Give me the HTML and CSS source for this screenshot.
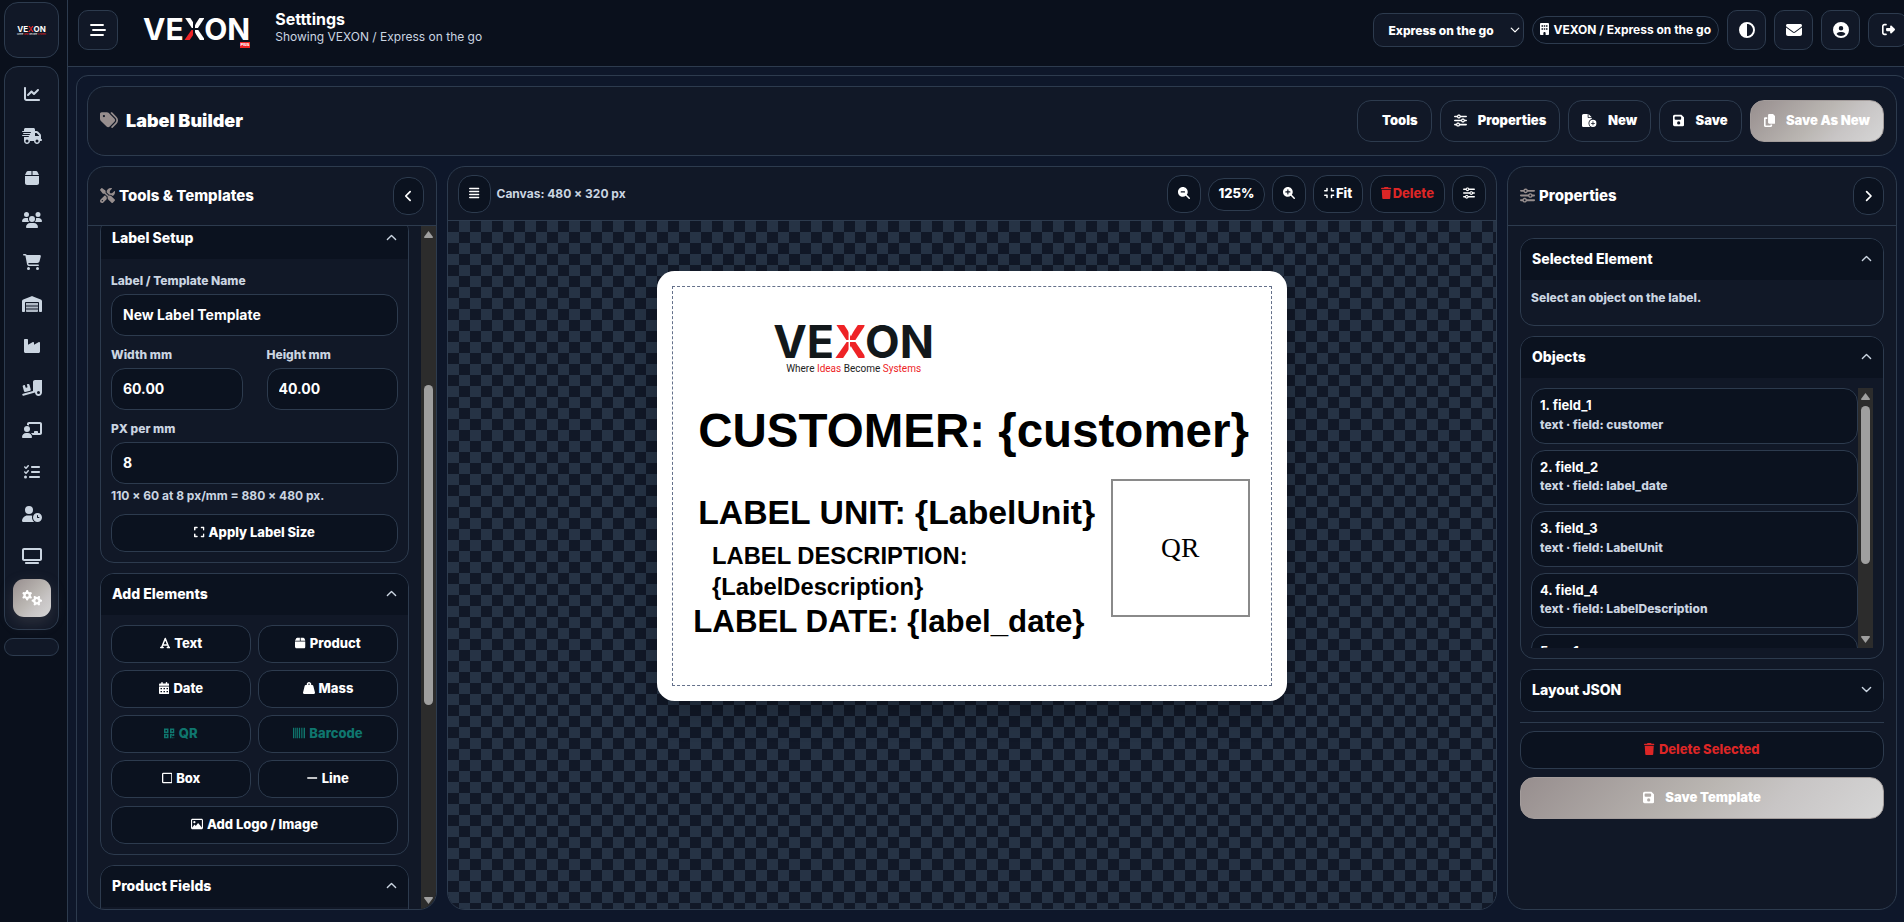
FILE: index.html
```html
<!DOCTYPE html>
<html lang="en">
<head>
<meta charset="utf-8">
<meta name="viewport" content="width=device-width, initial-scale=1">
<title>Label Builder</title>
<link rel="stylesheet" href="styles.css">
</head>
<body>
<svg class="sprite" aria-hidden="true">
  <symbol id="i-chart" viewBox="0 0 512 512"><path d="M64 64c0-17.700-14.300-32-32-32S0 46.300 0 64V400c0 44.200 35.800 80 80 80H480c17.700 0 32-14.300 32-32s-14.300-32-32-32H80c-8.800 0-16-7.200-16-16V64zm406.600 86.600c12.500-12.500 12.500-32.800 0-45.300s-32.800-12.500-45.300 0L320 210.700l-57.400-57.400c-12.500-12.500-32.800-12.500-45.300 0l-112 112c-12.500 12.500-12.500 32.800 0 45.300s32.800 12.500 45.300 0L240 221.300l57.400 57.400c12.500 12.500 32.800 12.500 45.300 0l128-128z"/></symbol>
  <symbol id="i-truck" viewBox="0 0 640 512"><path d="M112 0C85.500 0 64 21.500 64 48V96H16c-8.800 0-16 7.200-16 16s7.200 16 16 16H272c8.800 0 16 7.200 16 16s-7.200 16-16 16H48c-8.800 0-16 7.200-16 16s7.200 16 16 16H240c8.800 0 16 7.200 16 16s-7.200 16-16 16H16c-8.800 0-16 7.200-16 16s7.200 16 16 16H208c8.800 0 16 7.200 16 16s-7.200 16-16 16H64V416c0 53 43 96 96 96s96-43 96-96H384c0 53 43 96 96 96s96-43 96-96h32c17.700 0 32-14.300 32-32s-14.300-32-32-32V237.300c0-17-6.700-33.300-18.700-45.300L512 114.700c-12-12-28.300-18.700-45.300-18.700H416V48c0-26.500-21.500-48-48-48H112zM544 237.300V256H416V160h50.700L544 237.300zM160 368a48 48 0 1 1 0 96 48 48 0 1 1 0-96zm272 48a48 48 0 1 1 96 0 48 48 0 1 1 -96 0z"/></symbol>
  <symbol id="i-box" viewBox="0 0 448 512"><path d="M50.700 58.500L0 160H208V32H93.700C75.500 32 58.900 42.300 50.700 58.500zM240 160H448L397.300 58.500C389.100 42.300 372.500 32 354.300 32H240V160zm208 32H0V416c0 35.300 28.700 64 64 64H384c35.300 0 64-28.700 64-64V192z"/></symbol>
  <symbol id="i-users" viewBox="0 0 640 512"><path d="M144 0a80 80 0 1 1 0 160A80 80 0 1 1 144 0zM512 0a80 80 0 1 1 0 160A80 80 0 1 1 512 0zM0 298.700C0 239.800 47.800 192 106.700 192h42.700c15.900 0 31 3.500 44.600 9.700c-1.300 7.200-1.900 14.700-1.900 22.300c0 38.200 16.800 72.500 43.300 96H21.300C9.600 320 0 310.400 0 298.700zM404.600 320c26.600-23.500 43.300-57.800 43.300-96c0-7.600-.7-15-1.900-22.300c13.600-6.300 28.700-9.700 44.600-9.700h42.700C592.200 192 640 239.800 640 298.700c0 11.800-9.600 21.300-21.300 21.300H404.600zM224 224a96 96 0 1 1 192 0 96 96 0 1 1 -192 0zM128 485.300C128 411.700 187.700 352 261.300 352H378.700C452.300 352 512 411.700 512 485.300c0 14.700-11.900 26.700-26.700 26.700H154.700c-14.700 0-26.700-11.900-26.700-26.700z"/></symbol>
  <symbol id="i-cart" viewBox="0 0 576 512"><path d="M0 24C0 10.700 10.700 0 24 0H69.500c22 0 41.500 12.800 50.600 32h411c26.300 0 45.500 25 38.600 50.400l-41 152.300c-8.500 31.400-37 53.300-69.500 53.300H170.700l5.400 28.500c2.200 11.300 12.100 19.500 23.600 19.500H488c13.300 0 24 10.700 24 24s-10.700 24-24 24H199.700c-34.600 0-64.300-24.600-70.700-58.500L77.400 54.500c-.7-3.800-4-6.500-7.900-6.500H24C10.700 48 0 37.300 0 24zM128 464a48 48 0 1 1 96 0 48 48 0 1 1 -96 0zm336-48a48 48 0 1 1 0 96 48 48 0 1 1 0-96z"/></symbol>
  <symbol id="i-warehouse" viewBox="0 0 640 512"><path d="M0 488V171.300c0-26.200 15.900-49.700 40.200-59.400L308.100 4.800c7.600-3.100 16.100-3.100 23.800 0L599.800 111.900c24.300 9.700 40.200 33.300 40.200 59.400V488c0 13.300-10.700 24-24 24H568c-13.300 0-24-10.700-24-24V224c0-17.700-14.300-32-32-32H128c-17.700 0-32 14.300-32 32V488c0 13.300-10.700 24-24 24H24c-13.300 0-24-10.700-24-24z"/><path d="M488 512H152c-13.300 0-24-10.700-24-24V432H512v56c0 13.300-10.700 24-24 24zM128 400V336H512v64zM128 304V224H512v80z" opacity=".85"/></symbol>
  <symbol id="i-industry" viewBox="0 0 512 512"><path d="M32 32C14.300 32 0 46.300 0 64V432c0 26.500 21.500 48 48 48H464c26.500 0 48-21.500 48-48V152.200c0-18.200-19.400-29.700-35.400-21.100L320 215.400V152.200c0-18.200-19.400-29.700-35.400-21.100L128 215.400V64c0-17.700-14.300-32-32-32H32z"/></symbol>
  <symbol id="i-ramp" viewBox="0 0 640 512"><path d="M640 0V400c0 61.900-50.100 112-112 112c-61 0-110.500-48.700-112-109.300L48.400 502.900c-17.100 4.600-34.600-5.400-39.300-22.500s5.400-34.600 22.500-39.300L352 353.800V64c0-35.300 28.700-64 64-64H640zM576 400a48 48 0 1 0 -96 0 48 48 0 1 0 96 0zM23.100 207.700c-4.600-17.100 5.600-34.600 22.600-39.200l46.400-12.400 20.700 77.300c2.300 8.500 11.100 13.600 19.600 11.300l30.900-8.300c8.500-2.300 13.600-11.100 11.300-19.600l-20.700-77.300 46.400-12.400c17.100-4.600 34.600 5.600 39.200 22.600l41.400 154.500c4.600 17.100-5.600 34.600-22.600 39.200L103.700 384.900c-17.100 4.600-34.600-5.600-39.200-22.600L23.100 207.700z"/></symbol>
  <symbol id="i-board" viewBox="0 0 640 512"><path d="M160 64c0-35.300 28.700-64 64-64H576c35.300 0 64 28.700 64 64V352c0 35.300-28.700 64-64 64H336.800c-11.800-25.500-29.900-47.500-52.400-64H384V320c0-17.700 14.300-32 32-32h64c17.700 0 32 14.300 32 32v32h64V64L224 64v49.100C205.200 102.200 183.300 96 160 96V64zm0 64a96 96 0 1 1 0 192 96 96 0 1 1 0-192zM133.300 352h53.300C260.300 352 320 411.700 320 485.300c0 14.700-11.900 26.700-26.700 26.700H26.700C11.900 512 0 500.100 0 485.300C0 411.700 59.700 352 133.300 352z"/></symbol>
  <symbol id="i-list" viewBox="0 0 512 512"><path d="M152.100 38.200c9.900 8.900 10.700 24 1.800 33.900l-72 80c-4.400 4.900-10.600 7.800-17.200 7.900s-12.900-2.400-17.600-7L7 113C-2.300 103.600-2.300 88.400 7 79s24.600-9.400 33.900 0l22.100 22.100 55.100-61.200c8.900-9.900 24-10.700 33.900-1.800zm0 160c9.900 8.900 10.700 24 1.800 33.900l-72 80c-4.400 4.900-10.600 7.800-17.200 7.900s-12.900-2.400-17.600-7L7 273c-9.400-9.400-9.400-24.600 0-33.900s24.600-9.400 33.900 0l22.100 22.100 55.100-61.200c8.900-9.900 24-10.700 33.900-1.800zM224 96c0-17.700 14.300-32 32-32H480c17.700 0 32 14.300 32 32s-14.300 32-32 32H256c-17.700 0-32-14.300-32-32zm0 160c0-17.700 14.300-32 32-32H480c17.700 0 32 14.300 32 32s-14.300 32-32 32H256c-17.700 0-32-14.300-32-32zM160 416c0-17.700 14.300-32 32-32H480c17.700 0 32 14.300 32 32s-14.300 32-32 32H192c-17.700 0-32-14.300-32-32zM48 368a48 48 0 1 1 0 96 48 48 0 1 1 0-96z"/></symbol>
  <symbol id="i-clock" viewBox="0 0 640 512"><path d="M224 0a128 128 0 1 1 0 256A128 128 0 1 1 224 0zM178.300 304h91.400c20.600 0 40.400 3.500 58.800 9.900C323 331 320 349.100 320 368c0 59.500 29.500 112.100 74.800 144H29.700C13.300 512 0 498.700 0 482.300C0 383.800 79.800 304 178.300 304z"/><path fill-rule="evenodd" d="M352 368a144 144 0 1 1 288 0 144 144 0 1 1 -288 0zM496 288c-8.800 0-16 7.200-16 16v64c0 8.800 7.200 16 16 16h48c8.800 0 16-7.200 16-16s-7.200-16-16-16H512V304c0-8.800-7.200-16-16-16z"/></symbol>
  <symbol id="i-tv" viewBox="0 0 640 512"><path fill-rule="evenodd" d="M64 64V352H576V64H64zM0 64C0 28.700 28.700 0 64 0H576c35.300 0 64 28.700 64 64V352c0 35.300-28.700 64-64 64H64c-35.300 0-64-28.700-64-64V64zM128 448H512c17.700 0 32 14.300 32 32s-14.300 32-32 32H128c-17.700 0-32-14.300-32-32s14.300-32 32-32z"/></symbol>
  <symbol id="i-gears" viewBox="0 0 640 512">
    <g id="gear"><circle cx="165" cy="170" r="84" fill="none" stroke="currentColor" stroke-width="72"/><path d="M165 38V62M165 278v24M51 104l20 12M259 224l20 12M51 236l20-12M259 116l20-12" fill="none" stroke="currentColor" stroke-width="74" stroke-linecap="round"/></g>
    <use href="#gear" transform="rotate(30 475 342) translate(310 172)"/>
  </symbol>
  <symbol id="i-tags" viewBox="0 0 512 512"><path d="M345 39.100L472.800 168.400c52.400 53 52.400 138.200 0 191.200L360.800 472.900c-9.300 9.400-24.500 9.500-33.900 .2s-9.500-24.500-.2-33.900L438.600 325.900c33.900-34.300 33.900-89.400 0-123.700L310.900 72.900c-9.300-9.400-9.200-24.600 .2-33.900s24.600-9.200 33.900 .2zM0 229.500V80C0 53.500 21.500 32 48 32H197.500c17 0 33.300 6.700 45.300 18.700l168 168c25 25 25 65.500 0 90.500L277.300 442.700c-25 25-65.500 25-90.500 0l-168-168C6.700 262.700 0 246.500 0 229.500zM144 144a32 32 0 1 0 -64 0 32 32 0 1 0 64 0z"/></symbol>
  <symbol id="i-tools" viewBox="0 0 512 512"><path d="M78.600 5C69.100-2.400 55.600-1.500 47 7L7 47c-8.500 8.500-9.400 22-2.100 31.600l80 104c4.500 5.900 11.600 9.400 19 9.400h54.100l109 109c-14.700 29-10 65.400 14.300 89.600l112 112c12.500 12.500 32.800 12.500 45.300 0l64-64c12.500-12.500 12.500-32.800 0-45.300l-112-112c-24.200-24.200-60.600-29-89.600-14.300l-109-109V104c0-7.500-3.500-14.500-9.400-19L78.600 5zM19.900 396.100C7.200 408.800 0 426.100 0 444.100C0 481.600 30.400 512 67.900 512c18 0 35.300-7.200 48-19.900L233.700 374.300c-7.800-20.900-9-43.600-3.600-65.100l-61.700-61.700L19.900 396.100zM512 144c0-10.500-1.100-20.700-3.200-30.500c-2.400-11.200-16.100-14.100-24.200-6l-63.900 63.900c-3 3-7.100 4.700-11.300 4.700H352c-8.800 0-16-7.200-16-16V102.600c0-4.200 1.700-8.300 4.700-11.300l63.900-63.900c8.100-8.100 5.200-21.800-6-24.200C388.700 1.100 378.500 0 368 0C288.500 0 224 64.500 224 144l0 .8 85.300 85.300c36-9.100 75.800 .5 104 28.700L429 274.500c49-23 83-72.800 83-130.500zM56 432a24 24 0 1 1 48 0 24 24 0 1 1 -48 0z"/></symbol>
  <symbol id="i-sliders" viewBox="0 0 512 512"><path d="M0 416c0 17.700 14.300 32 32 32l54.700 0c12.300 28.300 40.500 48 73.300 48s61-19.700 73.300-48L480 448c17.700 0 32-14.300 32-32s-14.300-32-32-32l-246.700 0c-12.300-28.300-40.500-48-73.300-48s-61 19.700-73.300 48L32 384c-17.700 0-32 14.300-32 32zm128 0a32 32 0 1 1 64 0 32 32 0 1 1 -64 0zM320 256a32 32 0 1 1 64 0 32 32 0 1 1 -64 0zm32-80c-32.800 0-61 19.700-73.300 48L32 224c-17.700 0-32 14.300-32 32s14.300 32 32 32l246.700 0c12.300 28.300 40.500 48 73.300 48s61-19.700 73.300-48l54.700 0c17.700 0 32-14.300 32-32s-14.300-32-32-32l-54.700 0c-12.300-28.300-40.500-48-73.300-48zM192 128a32 32 0 1 1 0-64 32 32 0 1 1 0 64zm73.300-64C253 35.700 224.800 16 192 16s-61 19.700-73.300 48L32 64C14.300 64 0 78.300 0 96s14.300 32 32 32l86.700 0c12.300 28.300 40.500 48 73.300 48s61-19.700 73.300-48L480 128c17.700 0 32-14.300 32-32s-14.300-32-32-32L265.300 64z"/></symbol>
  <symbol id="i-save" viewBox="0 0 448 512"><path fill-rule="evenodd" d="M64 32C28.700 32 0 60.700 0 96V416c0 35.300 28.700 64 64 64H384c35.300 0 64-28.700 64-64V173.300c0-17-6.700-33.300-18.700-45.300L352 50.700C340 38.700 323.700 32 306.700 32H64zm0 96c0-17.700 14.300-32 32-32H288c17.700 0 32 14.300 32 32v64c0 17.700-14.300 32-32 32H96c-17.700 0-32-14.300-32-32V128zM224 288a64 64 0 1 1 0 128 64 64 0 1 1 0-128z"/></symbol>
  <symbol id="i-new" viewBox="0 0 576 512"><path d="M0 64C0 28.700 28.700 0 64 0H224V128c0 17.700 14.300 32 32 32H384v38.600C310.100 219.500 256 287.400 256 368c0 59.100 29.100 111.300 73.700 143.300c-3.200 .5-6.400 .7-9.700 .7H64c-35.300 0-64-28.700-64-64V64zm384 64H256V0L384 128z"/><path fill-rule="evenodd" d="M288 368a144 144 0 1 1 288 0 144 144 0 1 1 -288 0zM448 304c0-8.800-7.200-16-16-16s-16 7.200-16 16v48H368c-8.800 0-16 7.200-16 16s7.200 16 16 16h48v48c0 8.800 7.200 16 16 16s16-7.200 16-16V384h48c8.800 0 16-7.200 16-16s-7.200-16-16-16H448V304z"/></symbol>
  <symbol id="i-copy" viewBox="0 0 448 512"><path d="M208 0H332.100c12.700 0 24.900 5.100 33.900 14.100l67.900 67.900c9 9 14.100 21.200 14.100 33.900V336c0 26.500-21.500 48-48 48H208c-26.500 0-48-21.500-48-48V48c0-26.500 21.500-48 48-48zM48 128h80v64H64V448H256V416h64v48c0 26.500-21.500 48-48 48H48c-26.500 0-48-21.500-48-48V176c0-26.500 21.500-48 48-48z"/></symbol>
  <symbol id="i-building" viewBox="0 0 384 512"><path fill-rule="evenodd" d="M48 0C21.500 0 0 21.500 0 48V464c0 26.500 21.500 48 48 48h96V432c0-26.500 21.500-48 48-48s48 21.500 48 48v80h96c26.500 0 48-21.500 48-48V48c0-26.500-21.500-48-48-48H48zM64 96h64v64H64zM160 96h64v64h-64zM256 96h64v64h-64zM64 224h64v64H64zM160 224h64v64h-64zM256 224h64v64h-64z"/></symbol>
  <symbol id="i-half" viewBox="0 0 512 512"><path fill-rule="evenodd" d="M448 256c0-106-86-192-192-192V448c106 0 192-86 192-192zM0 256a256 256 0 1 1 512 0A256 256 0 1 1 0 256z"/></symbol>
  <symbol id="i-mail" viewBox="0 0 512 512"><path d="M48 64C21.500 64 0 85.500 0 112c0 15.100 7.100 29.300 19.200 38.400L236.800 313.600c11.400 8.500 27 8.500 38.400 0L492.800 150.400c12.100-9.100 19.200-23.300 19.200-38.400c0-26.500-21.500-48-48-48H48zM0 176V384c0 35.300 28.700 64 64 64H448c35.300 0 64-28.700 64-64V176L294.400 339.200c-22.800 17.100-54 17.100-76.800 0L0 176z"/></symbol>
  <symbol id="i-user" viewBox="0 0 512 512"><path fill-rule="evenodd" d="M399 384.200C376.900 345.800 335.400 320 288 320H224c-47.400 0-88.900 25.800-111 64.200c35.200 39.200 86.200 63.800 143 63.800s107.800-24.700 143-63.800zM0 256a256 256 0 1 1 512 0A256 256 0 1 1 0 256zm256 16a72 72 0 1 0 0-144 72 72 0 1 0 0 144z"/></symbol>
  <symbol id="i-exit" viewBox="0 0 512 512"><path d="M377.900 105.900L500.700 228.700c7.200 7.200 11.300 17.100 11.300 27.300s-4.100 20.100-11.300 27.300L377.900 406.100c-6.400 6.400-15 9.900-24 9.900c-18.700 0-33.900-15.200-33.900-33.900l0-62.100-128 0c-17.700 0-32-14.300-32-32l0-64c0-17.700 14.300-32 32-32l128 0 0-62.100c0-18.700 15.200-33.900 33.900-33.900c9 0 17.600 3.600 24 9.900zM160 96L96 96c-17.700 0-32 14.300-32 32l0 256c0 17.700 14.300 32 32 32l64 0c17.700 0 32 14.300 32 32s-14.300 32-32 32l-64 0c-53 0-96-43-96-96L0 128C0 75 43 32 96 32l64 0c17.700 0 32 14.300 32 32s-14.300 32-32 32z"/></symbol>
  <symbol id="i-stagger" viewBox="0 0 512 512"><path d="M32 96H416M96 256H480M32 416H416" fill="none" stroke="currentColor" stroke-width="60" stroke-linecap="round"/></symbol>
  <symbol id="i-lines" viewBox="0 0 448 512"><path d="M32 64H416M32 192H416M32 320H416M32 448H416" fill="none" stroke="currentColor" stroke-width="62" stroke-linecap="round"/></symbol>
  <symbol id="i-zoomout" viewBox="0 0 512 512"><path fill-rule="evenodd" d="M416 208c0 45.900-14.900 88.300-40 122.700L502.600 457.400c12.500 12.500 12.500 32.800 0 45.300s-32.800 12.500-45.300 0L330.700 376c-34.400 25.200-76.800 40-122.700 40C93.100 416 0 322.900 0 208S93.100 0 208 0S416 93.100 416 208zM136 184c-13.300 0-24 10.700-24 24s10.700 24 24 24H280c13.300 0 24-10.700 24-24s-10.700-24-24-24H136z"/></symbol>
  <symbol id="i-zoomin" viewBox="0 0 512 512"><path fill-rule="evenodd" d="M416 208c0 45.900-14.900 88.300-40 122.700L502.600 457.400c12.500 12.500 12.500 32.800 0 45.300s-32.800 12.500-45.300 0L330.700 376c-34.400 25.200-76.800 40-122.700 40C93.100 416 0 322.900 0 208S93.100 0 208 0S416 93.100 416 208zM184 296c0 13.300 10.700 24 24 24s24-10.700 24-24V232h64c13.300 0 24-10.700 24-24s-10.700-24-24-24H232V120c0-13.300-10.700-24-24-24s-24 10.700-24 24v64H120c-13.300 0-24 10.700-24 24s10.700 24 24 24h64v64z"/></symbol>
  <symbol id="i-compress" viewBox="0 0 448 512"><path d="M128 64v96H32M320 64v96h96M32 352h96v96M416 352h-96v96" fill="none" stroke="currentColor" stroke-width="64" stroke-linecap="round" stroke-linejoin="round"/></symbol>
  <symbol id="i-expand" viewBox="0 0 448 512"><path d="M32 160V64H128M320 64h96v96M416 352v96H320M128 448H32V352" fill="none" stroke="currentColor" stroke-width="64" stroke-linecap="round" stroke-linejoin="round"/></symbol>
  <symbol id="i-trash" viewBox="0 0 448 512"><path d="M135.200 17.700L128 32H32C14.300 32 0 46.300 0 64S14.300 96 32 96H416c17.700 0 32-14.300 32-32s-14.300-32-32-32H320l-7.200-14.300C307.400 6.800 296.300 0 284.200 0H163.800c-12.100 0-23.200 6.800-28.600 17.700zM416 128H32L53.200 467c1.600 25.300 22.600 45 47.900 45H346.900c25.300 0 46.300-19.700 47.900-45L416 128z"/></symbol>
  <symbol id="i-font" viewBox="0 0 448 512"><path d="M75 440L224 64L373 440M128 336H320M32 448H136M312 448H416" fill="none" stroke="currentColor" stroke-width="64" stroke-linecap="round" stroke-linejoin="round"/></symbol>
  <symbol id="i-calendar" viewBox="0 0 448 512"><path fill-rule="evenodd" d="M96 32a32 32 0 0 1 64 0V64H288V32a32 32 0 0 1 64 0V64h48c26.500 0 48 21.500 48 48v48H0V112C0 85.500 21.500 64 48 64H96zM0 192H448V464c0 26.500-21.500 48-48 48H48c-26.500 0-48-21.500-48-48zM64 256v56h64V256zM192 256v56h64V256zM320 256v56h64V256zM64 384v56h64V384zM192 384v56h64V384zM320 384v56h64V384z"/></symbol>
  <symbol id="i-weight" viewBox="0 0 512 512"><path fill-rule="evenodd" d="M224 96a32 32 0 1 1 64 0 32 32 0 1 1 -64 0zm122.500 32c3.500-10 5.500-20.800 5.500-32c0-53-43-96-96-96s-96 43-96 96c0 11.200 1.900 22 5.500 32H120c-22 0-41.200 15-46.600 36.400l-72 288c-3.600 14.300-.4 29.500 8.700 41.200S33.200 512 48 512H464c14.800 0 28.700-6.800 37.800-18.500s12.300-26.800 8.700-41.200l-72-288C433.200 143 414 128 392 128H346.500z"/></symbol>
  <symbol id="i-qr" viewBox="0 0 448 512"><path fill-rule="evenodd" d="M0 64h192v192H0zM64 128v64h64v-64zM256 64h192v192H256zM320 128v64h64v-64zM0 288h192v192H0zM64 352v64h64v-64zM256 288h96v64h-32v128h-64zM384 288h64v96h-96v-64h32zM352 432h40v48h-40zM416 432h32v48h-32z"/></symbol>
  <symbol id="i-barcode" viewBox="0 0 512 512"><path d="M0 32h56v448H0zM88 32h32v448H88zM152 32h56v448h-56zM248 32h56v448h-56zM344 32h32v448h-32zM408 32h24v448h-24zM456 32h56v448h-56z"/></symbol>
  <symbol id="i-square" viewBox="0 0 448 512"><rect x="28" y="60" width="392" height="392" rx="30" fill="none" stroke="currentColor" stroke-width="54"/></symbol>
  <symbol id="i-minus" viewBox="0 0 448 512"><path d="M32 256H416" stroke="currentColor" stroke-width="60" stroke-linecap="round"/></symbol>
  <symbol id="i-image" viewBox="0 0 512 512"><path d="M448 80c8.800 0 16 7.200 16 16V415.800l-5-6.500-136-176c-4.500-5.900-11.600-9.300-19-9.300s-14.400 3.400-19 9.300L202 340.700l-30.500-42.700C167 291.700 159.800 288 152 288s-15 3.700-19.500 10.100l-80 112L48 416.300l0-.3V96c0-8.800 7.200-16 16-16H448zM64 32C28.700 32 0 60.700 0 96V416c0 35.300 28.700 64 64 64H448c35.300 0 64-28.700 64-64V96c0-35.300-28.700-64-64-64H64zm80 192a48 48 0 1 0 0-96 48 48 0 1 0 0 96z"/></symbol>
  <symbol id="i-left" viewBox="0 0 320 512"><path d="M224 96L64 256l160 160" fill="none" stroke="currentColor" stroke-width="64" stroke-linecap="round" stroke-linejoin="round"/></symbol>
  <symbol id="i-right" viewBox="0 0 320 512"><path d="M96 96l160 160L96 416" fill="none" stroke="currentColor" stroke-width="64" stroke-linecap="round" stroke-linejoin="round"/></symbol>
  <symbol id="i-up" viewBox="0 0 512 512"><path d="M64 352L256 160l192 192" fill="none" stroke="currentColor" stroke-width="64" stroke-linecap="round" stroke-linejoin="round"/></symbol>
  <symbol id="i-down" viewBox="0 0 512 512"><path d="M64 160L256 352l192-192" fill="none" stroke="currentColor" stroke-width="64" stroke-linecap="round" stroke-linejoin="round"/></symbol>
</svg>

<div class="app">
  <aside class="sidebar">
    <a class="side-logo" href="#">
      <span class="wordmark wordmark-tiny">VE<span class="x">X</span>ON</span>
      <span class="side-tag">Where <em>Ideas</em> Become <em>Systems</em></span>
    </a>
    <nav class="side-nav" aria-label="Main">
      <a href="#" aria-label="Dashboard"><svg class="ico"><use href="#i-chart"/></svg></a>
      <a href="#" aria-label="Deliveries"><svg class="ico w640"><use href="#i-truck"/></svg></a>
      <a href="#" aria-label="Products"><svg class="ico w448"><use href="#i-box"/></svg></a>
      <a href="#" aria-label="Customers"><svg class="ico w640"><use href="#i-users"/></svg></a>
      <a href="#" aria-label="Orders"><svg class="ico w576"><use href="#i-cart"/></svg></a>
      <a href="#" aria-label="Warehouse"><svg class="ico w640"><use href="#i-warehouse"/></svg></a>
      <a href="#" aria-label="Production"><svg class="ico"><use href="#i-industry"/></svg></a>
      <a href="#" aria-label="Dispatch"><svg class="ico w640"><use href="#i-ramp"/></svg></a>
      <a href="#" aria-label="Training"><svg class="ico w640"><use href="#i-board"/></svg></a>
      <a href="#" aria-label="Tasks"><svg class="ico"><use href="#i-list"/></svg></a>
      <a href="#" aria-label="Attendance"><svg class="ico w640"><use href="#i-clock"/></svg></a>
      <a href="#" aria-label="Displays"><svg class="ico w640"><use href="#i-tv"/></svg></a>
      <a href="#" class="active" aria-label="Settings"><svg class="ico w640"><use href="#i-gears"/></svg></a>
    </nav>
    <div class="side-foot"></div>
  </aside>

  <div class="page">
    <header class="topbar">
      <button class="icon-btn" aria-label="Toggle menu"><svg class="ico"><use href="#i-stagger"/></svg></button>
      <a class="brand" href="#"><span class="wordmark wordmark-light">VE<span class="x">X</span>ON</span><span class="badge">Plus</span></a>
      <div class="page-title"><h1>Setttings</h1><p>Showing VEXON / Express on the go</p></div>
      <div class="top-actions">
        <div class="select-wrap">
          <select aria-label="Branch"><option>Express on the go</option></select>
          <svg class="ico"><use href="#i-down"/></svg>
        </div>
        <span class="pill"><svg class="ico w384"><use href="#i-building"/></svg>VEXON / Express on the go</span>
        <button class="icon-btn narrow" aria-label="Theme"><svg class="ico"><use href="#i-half"/></svg></button>
        <button class="icon-btn narrow" aria-label="Messages"><svg class="ico"><use href="#i-mail"/></svg></button>
        <button class="icon-btn narrow" aria-label="Account"><svg class="ico"><use href="#i-user"/></svg></button>
        <button class="icon-btn small" aria-label="Log out"><svg class="ico"><use href="#i-exit"/></svg></button>
      </div>
    </header>

    <main class="workspace">
      <section class="builder-head">
        <h2><svg class="ico"><use href="#i-tags"/></svg>Label Builder</h2>
        <div class="head-actions">
          <button class="btn"><span class="no-icon"></span>Tools</button>
          <button class="btn"><svg class="ico"><use href="#i-sliders"/></svg>Properties</button>
          <button class="btn"><svg class="ico w576"><use href="#i-new"/></svg>New</button>
          <button class="btn"><svg class="ico w448"><use href="#i-save"/></svg>Save</button>
          <button class="btn primary"><svg class="ico w448"><use href="#i-copy"/></svg>Save As New</button>
        </div>
      </section>

      <div class="columns">
        <section class="panel">
          <header class="panel-head">
            <h3><svg class="ico"><use href="#i-tools"/></svg>Tools &amp; Templates</h3>
            <button class="chip collapse" aria-label="Collapse tools"><svg class="ico w320"><use href="#i-left"/></svg></button>
          </header>
          <div class="scroll">
            <div class="scroll-body scrolled">
              <section class="card">
                <button class="card-head">Label Setup<svg class="ico"><use href="#i-up"/></svg></button>
                <div class="card-body form">
                  <div class="field"><label for="name">Label / Template Name</label><input id="name" type="text" value="New Label Template"></div>
                  <div class="pair">
                    <div class="field"><label for="w">Width mm</label><input id="w" type="text" value="60.00"></div>
                    <div class="field"><label for="h">Height mm</label><input id="h" type="text" value="40.00"></div>
                  </div>
                  <div class="field"><label for="px">PX per mm</label><input id="px" type="text" value="8"><p class="hint">110 × 60 at 8 px/mm = 880 × 480 px.</p></div>
                  <button class="chip wide"><svg class="ico w448"><use href="#i-expand"/></svg>Apply Label Size</button>
                </div>
              </section>
              <section class="card">
                <button class="card-head">Add Elements<svg class="ico"><use href="#i-up"/></svg></button>
                <div class="card-body">
                  <div class="elements">
                    <button class="chip wide"><svg class="ico w448"><use href="#i-font"/></svg>Text</button>
                    <button class="chip wide"><svg class="ico w448"><use href="#i-box"/></svg>Product</button>
                    <button class="chip wide"><svg class="ico w448"><use href="#i-calendar"/></svg>Date</button>
                    <button class="chip wide"><svg class="ico"><use href="#i-weight"/></svg>Mass</button>
                    <button class="chip wide teal"><svg class="ico w448"><use href="#i-qr"/></svg>QR</button>
                    <button class="chip wide teal"><svg class="ico"><use href="#i-barcode"/></svg>Barcode</button>
                    <button class="chip wide"><svg class="ico w448"><use href="#i-square"/></svg>Box</button>
                    <button class="chip wide"><svg class="ico w448"><use href="#i-minus"/></svg>Line</button>
                  </div>
                  <button class="chip wide"><svg class="ico"><use href="#i-image"/></svg>Add Logo / Image</button>
                </div>
              </section>
              <section class="card">
                <button class="card-head">Product Fields<svg class="ico"><use href="#i-up"/></svg></button>
                <div class="card-body"></div>
              </section>
            </div>
            <div class="scrollbar tools-bar" aria-hidden="true"><i class="arrow-up"></i><i class="before"></i><i class="thumb"></i><i class="after"></i><i class="arrow-down"></i></div>
          </div>
        </section>

        <section class="panel stage">
          <header class="stage-bar">
            <button class="chip" aria-label="Tools"><svg class="ico w448"><use href="#i-lines"/></svg></button>
            <span class="canvas-size">Canvas: 480 × 320 px</span>
            <div class="stage-tools">
              <button class="chip" aria-label="Zoom out"><svg class="ico"><use href="#i-zoomout"/></svg></button>
              <span class="zoom-level">125%</span>
              <button class="chip" aria-label="Zoom in"><svg class="ico"><use href="#i-zoomin"/></svg></button>
              <button class="chip"><svg class="ico w448"><use href="#i-compress"/></svg>Fit</button>
              <button class="chip danger"><svg class="ico w448"><use href="#i-trash"/></svg>Delete</button>
              <button class="chip" aria-label="Properties"><svg class="ico"><use href="#i-sliders"/></svg></button>
            </div>
          </header>
          <div class="checker">
            <div class="label-paper">
              <div class="label-canvas">
                <div class="obj logo"><span class="wordmark wordmark-dark">VE<span class="x">X</span>ON</span><span class="logo-tag">Where <em>Ideas</em> Become <em>Systems</em></span></div>
                <div class="obj customer">CUSTOMER: {customer}</div>
                <div class="obj unit">LABEL UNIT: {LabelUnit}</div>
                <div class="obj description">LABEL DESCRIPTION: {LabelDescription}</div>
                <div class="obj date">LABEL DATE: {label_date}</div>
                <div class="obj qr">QR</div>
              </div>
            </div>
          </div>
        </section>

        <section class="panel">
          <header class="panel-head">
            <h3><svg class="ico"><use href="#i-sliders"/></svg>Properties</h3>
            <button class="chip collapse" aria-label="Collapse properties"><svg class="ico w320"><use href="#i-right"/></svg></button>
          </header>
          <div class="props">
            <section class="card">
              <button class="card-head">Selected Element<svg class="ico"><use href="#i-up"/></svg></button>
              <div class="card-body"><p class="empty">Select an object on the label.</p></div>
            </section>
            <section class="card">
              <button class="card-head">Objects<svg class="ico"><use href="#i-up"/></svg></button>
              <div class="card-body">
                <div class="object-list">
                  <ul>
                    <li><b>1. field_1</b><span>text · field: customer</span></li>
                    <li><b>2. field_2</b><span>text · field: label_date</span></li>
                    <li><b>3. field_3</b><span>text · field: LabelUnit</span></li>
                    <li><b>4. field_4</b><span>text · field: LabelDescription</span></li>
                    <li><b>5. qr_1</b><span>qr</span></li>
                  </ul>
                  <div class="scrollbar objects-bar" aria-hidden="true"><i class="arrow-up"></i><i class="before"></i><i class="thumb"></i><i class="after"></i><i class="arrow-down"></i></div>
                </div>
              </div>
            </section>
            <section class="card">
              <button class="card-head">Layout JSON<svg class="ico"><use href="#i-down"/></svg></button>
            </section>
            <div class="props-actions">
              <button class="chip wide danger"><svg class="ico w448"><use href="#i-trash"/></svg>Delete Selected</button>
              <button class="btn primary"><svg class="ico w448"><use href="#i-save"/></svg>Save Template</button>
            </div>
          </div>
        </section>
      </div>
    </main>
  </div>
</div>
</body>
</html>
```
FILE: styles.css
```css
:root {
  --line: #2d3b4e;
  --panel: #111827;
  --field: #0b121f;
  --muted: #cbd5e1;
  --accent: #978e8e;
  --red: #dc2626;
  --brand-red: #ee2326;
  --gradient: linear-gradient(135deg, #978e8e 0%, #bab6b2 50%, #c8c5c5 70%, #d6d6d6 100%);
}

* { box-sizing: border-box; }

body {
  margin: 0;
  overflow: hidden;
  background: #0e172a;
  color: #fff;
  font-family: Inter, "Liberation Sans", sans-serif;
  font-size: 14px;
}

h1, h2, h3, p, ul { margin: 0; padding: 0; }
a { color: inherit; text-decoration: none; }
em { font-style: normal; color: var(--brand-red); }
button, input, select { font: inherit; color: inherit; }
button { cursor: pointer; }

.sprite { position: absolute; width: 0; height: 0; }
.ico { width: 1em; height: 1em; flex: none; fill: currentColor; display: block; }
.w320 { width: 0.625em; }
.w384 { width: 0.75em; }
.w448 { width: 0.875em; }
.w576 { width: 1.125em; }
.w640 { width: 1.25em; }

.app { display: flex; height: 100vh; }

/* Sidebar */
.sidebar {
  flex: none;
  width: 68px;
  padding: 2px 8px 0 4px;
  display: flex;
  flex-direction: column;
  gap: 8px;
  background: #0a101c;
  border-right: 1px solid var(--line);
}
.side-logo, .side-nav, .side-foot {
  border: 1px solid var(--line);
  border-radius: 14px;
  background: var(--panel);
}
.side-logo {
  height: 56px;
  display: flex;
  flex-direction: column;
  align-items: center;
  justify-content: center;
}
.side-tag { font-size: 2px; line-height: 3px; }
.side-nav {
  display: flex;
  flex-direction: column;
  align-items: center;
  gap: 4px;
  padding: 8px 0 12px;
  color: var(--muted);
  font-size: 16px;
}
.side-nav a {
  width: 38px;
  height: 38px;
  display: grid;
  place-items: center;
  border-radius: 11px;
}
.side-nav .active {
  color: #fff;
  background: var(--gradient);
  box-shadow: 0 6px 16px rgba(151, 142, 142, 0.22);
}
.side-foot { height: 18px; border-radius: 9px; }

/* Wordmark: the X is painted in four quadrants with a gap between them */
.wordmark { font-weight: 700; line-height: 1; }
.wordmark .x {
  --arm: var(--brand-red);
  color: transparent;
  background-image:
    linear-gradient(var(--arm), var(--arm)),
    linear-gradient(var(--arm), var(--arm)),
    linear-gradient(var(--brand-red), var(--brand-red)),
    linear-gradient(var(--arm), var(--arm));
  background-position: 0 0, 100% 0, 0 100%, 100% 100%;
  background-size: 47% 48%;
  background-repeat: no-repeat;
  -webkit-background-clip: text;
  background-clip: text;
}
.wordmark-tiny { font-size: 8px; }
.wordmark-light { font-size: 30px; }
.wordmark-light .x { --arm: #fff; }
.wordmark-dark { font-size: 36px; color: #12181b; }

/* Topbar */
.page { flex: 1; min-width: 0; display: flex; flex-direction: column; }
.topbar {
  flex: none;
  height: 67px;
  margin-right: -4px;
  padding: 10px 0 0 10px;
  display: flex;
  align-items: flex-start;
  background: #0a101c;
  border-bottom: 1px solid var(--line);
}
.icon-btn {
  width: 40px;
  height: 40px;
  padding: 0;
  display: grid;
  place-items: center;
  font-size: 16px;
  background: var(--panel);
  border: 1px solid var(--line);
  border-radius: 10px;
}
.icon-btn.small { height: 34px; font-size: 13px; padding-bottom: 2px; }
.brand { position: relative; margin-left: 25px; padding-top: 4px; }
.badge {
  position: absolute;
  right: 0;
  top: 32px;
  padding: 0 1px;
  background: var(--brand-red);
  color: #fff;
  font-size: 4px;
  font-weight: 800;
  line-height: 6px;
}
.page-title { margin-left: 25px; }
.page-title h1 { font-size: 16px; font-weight: 700; line-height: 19px; }
.page-title p { font-size: 12px; line-height: 16px; color: var(--muted); }
.top-actions { margin-left: auto; height: 40px; display: flex; align-items: center; gap: 8px; }
.top-actions .narrow { width: 39px; }
.select-wrap { position: relative; }
.select-wrap select {
  appearance: none;
  width: 151px;
  height: 34px;
  padding: 0 20px 0 14px;
  background: var(--panel);
  border: 1px solid var(--line);
  border-radius: 10px;
  font-size: 12px;
  font-weight: 800;
}
.select-wrap .ico { position: absolute; right: 4px; top: 12px; font-size: 10px; }
.pill {
  height: 28px;
  padding: 0 7px 2px;
  display: flex;
  align-items: center;
  gap: 4px;
  font-size: 12px;
  font-weight: 700;
  background: var(--field);
  border: 1px solid var(--line);
  border-radius: 14px;
}

/* Workspace */
.workspace {
  flex: 1;
  min-height: 0;
  margin: 8px -4px -10px 8px;
  padding: 10px 10px 21px;
  display: flex;
  flex-direction: column;
  gap: 10px;
  border: 1px solid var(--line);
  border-radius: 12px;
}
.builder-head {
  flex: none;
  padding: 13px 12px;
  display: flex;
  align-items: center;
  justify-content: space-between;
  background: var(--panel);
  border: 1px solid var(--line);
  border-radius: 18px;
}
.builder-head h2 { padding-bottom: 2px; display: flex; align-items: center; gap: 8px; font-size: 18px; font-weight: 900; }
h2 .ico, h3 .ico { color: var(--accent); }
.head-actions { display: flex; gap: 8px; }
.btn {
  height: 42px;
  padding: 0 13px 2px;
  display: flex;
  align-items: center;
  justify-content: center;
  gap: 11px;
  font-size: 13px;
  font-weight: 900;
  background: var(--panel);
  border: 1px solid var(--line);
  border-radius: 14px;
}
.btn.primary { background: var(--gradient); border-color: #a39c9b; }

.columns { flex: 1; min-height: 0; display: grid; grid-template-columns: 350px minmax(0, 1fr) 390px; gap: 10px; }
.panel {
  min-height: 0;
  display: flex;
  flex-direction: column;
  overflow: hidden;
  background: var(--panel);
  border: 1px solid var(--line);
  border-radius: 18px;
}
.panel-head {
  flex: none;
  padding: 10px 12px;
  display: flex;
  align-items: center;
  justify-content: space-between;
  border-bottom: 1px solid var(--line);
}
.panel-head h3 { padding-bottom: 2px; display: flex; align-items: center; gap: 4px; font-size: 15px; font-weight: 800; }

.chip {
  height: 38px;
  padding: 0 10px 2px;
  display: flex;
  align-items: center;
  justify-content: center;
  gap: 1px;
  font-size: 13px;
  font-weight: 800;
  background: var(--field);
  border: 1px solid var(--line);
  border-radius: 14px;
}
.chip .ico { font-size: 12px; }
.chip.collapse { padding-bottom: 0; }
.chip.collapse .ico { font-size: 14px; }
.chip.wide { width: 100%; gap: 4px; }
.chip.danger { color: var(--red); }
.chip.teal { color: #0f766e; }

/* Cards */
.card { border: 1px solid var(--line); border-radius: 14px; overflow: hidden; }
.card-head {
  width: 100%;
  height: 41px;
  padding: 0 11px 2px;
  display: flex;
  align-items: center;
  justify-content: space-between;
  font-size: 14px;
  font-weight: 800;
  background: var(--field);
  border: 0;
}
.card-head .ico { font-size: 11px; color: var(--muted); }
.card-body { padding: 10px; }
.card-body.form { padding-top: 12px; display: flex; flex-direction: column; gap: 9px; }
.field label { display: block; padding-top: 1px; margin-bottom: 4px; font-size: 12px; font-weight: 800; line-height: 18px; color: var(--muted); }
.field input {
  width: 100%;
  height: 42px;
  padding: 0 11px 1px;
  font-size: 14px;
  font-weight: 700;
  background: var(--field);
  border: 1px solid var(--line);
  border-radius: 14px;
}
.pair { display: grid; grid-template-columns: 1fr 1fr; gap: 24px; }
.hint { margin-top: 3px; font-size: 12px; font-weight: 700; line-height: 18px; color: var(--muted); }
.elements { display: grid; grid-template-columns: 1fr 1fr; gap: 7px; margin-bottom: 8px; }

.scroll { flex: 1; min-height: 0; display: flex; }
.scroll-body { flex: 1; min-width: 0; padding: 0 12px; overflow: hidden; display: flex; flex-direction: column; gap: 10px; }
.scroll-body .card { flex: none; }
.scrolled .card:first-child { margin-top: -9px; }

/* Scrollbars */
.scrollbar { flex: none; width: 15px; display: flex; flex-direction: column; align-items: center; background: #2c2c2c; }
.arrow-up, .arrow-down { flex: none; width: 9px; height: 7px; margin: 5px 0; background: #9f9f9f; }
.arrow-up { clip-path: polygon(50% 0, 100% 85%, 95% 100%, 5% 100%, 0 85%); }
.arrow-down { clip-path: polygon(50% 100%, 100% 15%, 95% 0, 5% 0, 0 15%); }
.thumb { width: 9px; border-radius: 5px; background: #9f9f9f; }
.tools-bar .before { flex: 142 0 0; }
.tools-bar .thumb { flex: 319 0 0; }
.tools-bar .after { flex: 187 0 0; }
.objects-bar .before { flex: 1 0 0; }
.objects-bar .thumb { flex: 158 0 0; }
.objects-bar .after { flex: 67 0 0; }

/* Stage */
.stage-bar {
  flex: none;
  padding: 8px 10px 7px;
  display: flex;
  align-items: center;
  gap: 6px;
  border-bottom: 1px solid var(--line);
}
.canvas-size { padding-bottom: 2px; font-size: 12px; font-weight: 700; color: var(--muted); }
.stage-tools { margin-left: auto; display: flex; align-items: center; gap: 7px; }
.zoom-level {
  height: 33px;
  padding: 0 10px 2px;
  display: flex;
  align-items: center;
  font-size: 13px;
  font-weight: 800;
  background: var(--field);
  border: 1px solid var(--line);
  border-radius: 16px;
}
.checker {
  flex: 1;
  display: flex;
  justify-content: center;
  align-items: flex-start;
  padding: 50px;
  background: repeating-conic-gradient(#263345 0 25%, #111827 0 50%) 0 0 / 22px 22px;
}

/* Label drawn at the chosen zoom level */
.label-paper { zoom: 1.25; padding: 12px; background: #fff; border-radius: 14px; box-shadow: 0 8px 24px rgba(0, 0, 0, 0.25); }
.label-canvas {
  position: relative;
  width: 480px;
  height: 320px;
  outline: 1px dashed #64708a;
  outline-offset: -1px;
  color: #000;
  font-family: "Liberation Sans", Arial, sans-serif;
  font-weight: 700;
}
.obj { position: absolute; white-space: nowrap; line-height: 1; }
.logo { left: 81px; top: 26px; display: flex; flex-direction: column; align-items: center; font-family: Inter, sans-serif; }
.logo-tag { font-family: Roboto, sans-serif; font-size: 8px; font-weight: 400; line-height: 8px; color: #222; }
.customer { left: 21px; top: 97px; font-size: 38px; }
.unit { left: 21px; top: 168px; font-size: 27px; }
.description { left: 32px; top: 203px; width: 240px; font-size: 19px; line-height: 25px; white-space: normal; }
.date { left: 17px; top: 256px; font-size: 25px; }
.qr {
  left: 351px;
  top: 154px;
  width: 111px;
  height: 111px;
  display: grid;
  place-items: center;
  border: 2px solid #8a8a8a;
  font-family: "Liberation Serif", serif;
  font-size: 22px;
  font-weight: 400;
}

/* Properties */
.props { padding: 12px; display: flex; flex-direction: column; gap: 10px; }
.empty { padding-bottom: 9px; font-size: 12px; font-weight: 800; line-height: 16px; color: var(--muted); }
.object-list { height: 260px; display: flex; overflow: hidden; }
.object-list ul { flex: 1; display: flex; flex-direction: column; gap: 6px; list-style: none; }
.object-list li {
  flex: none;
  padding: 7px 8px 9px;
  display: flex;
  flex-direction: column;
  line-height: 1.5;
  background: var(--field);
  border: 1px solid var(--line);
  border-radius: 14px;
}
.object-list b { font-size: 13px; font-weight: 700; }
.object-list span { font-size: 12px; font-weight: 800; color: var(--muted); }
.props-actions { padding-top: 8px; display: flex; flex-direction: column; gap: 8px; border-top: 1px solid var(--line); }
```
